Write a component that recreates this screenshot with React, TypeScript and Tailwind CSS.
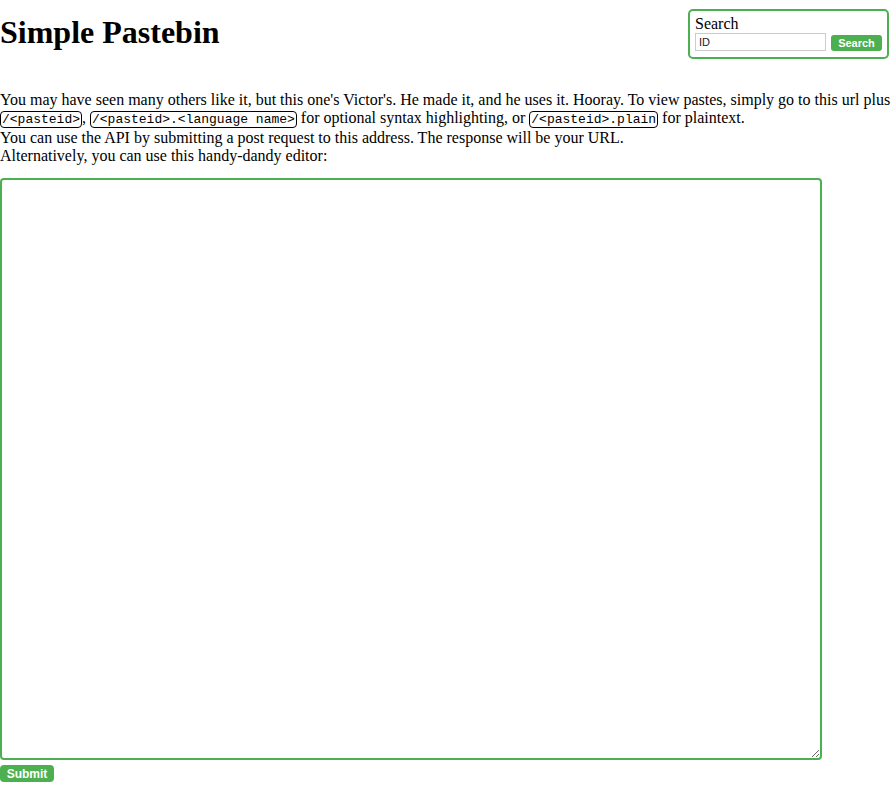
import React, { useState } from 'react';

const Code: React.FC<{ children: React.ReactNode }> = ({ children }) => (
  <code className="font-['Liberation_Mono',monospace] text-[13px] border border-black rounded-[4px] px-[1px]">
    {children}
  </code>
);

const App: React.FC = () => {
  const [query, setQuery] = useState('');
  const [paste, setPaste] = useState('');

  return (
    <div className="font-['Liberation_Serif',serif] text-[16px] text-black bg-white min-h-screen">
      <div className="flex justify-between items-start">
        <h1 className="text-[32px] font-bold leading-[normal] mt-[14px]">Simple Pastebin</h1>
        <form
          onSubmit={e => e.preventDefault()}
          className="border-2 border-[#4CAF50] rounded-[5px] mt-[9px] mr-[6px] pt-[4px] pb-[6px] px-[5px]"
        >
          <div className="leading-[normal]">Search</div>
          <div className="flex items-end gap-[5px]">
            <input
              value={query}
              onChange={e => setQuery(e.target.value)}
              placeholder="ID"
              className="w-[131px] h-[18px] border border-[#ccc] px-[3px] text-[11px] font-['Liberation_Sans',sans-serif] placeholder:text-[#222] outline-none"
            />
            <button className="w-[51px] h-[16px] bg-[#4CAF50] text-white rounded-[3px] text-[11px] font-bold font-['Liberation_Sans',sans-serif] leading-none">
              Search
            </button>
          </div>
        </form>
      </div>

      <p className="mt-[32px] leading-[18px]">
        You may have seen many others like it, but this one's Victor's. He made it, and he uses it. Hooray. To view
        pastes, simply go to this url plus <Code>/&lt;pasteid&gt;</Code>, <Code>/&lt;pasteid&gt;.&lt;language name&gt;</Code>{' '}
        for optional syntax highlighting, or <Code>/&lt;pasteid&gt;.plain</Code> for plaintext.
        <br />
        You can use the API by submitting a post request to this address. The response will be your URL.
        <br />
        Alternatively, you can use this handy-dandy editor:
      </p>

      <form onSubmit={e => e.preventDefault()} className="mt-[13px]">
        <textarea
          value={paste}
          onChange={e => setPaste(e.target.value)}
          className="block w-[822px] h-[582px] border-2 border-[#4CAF50] rounded-[4px] outline-none"
        />
        <button className="mt-[5px] w-[54px] h-[17px] bg-[#4CAF50] text-white rounded-[4px] text-[12px] font-bold font-['Liberation_Sans',sans-serif] leading-none">
          Submit
        </button>
      </form>
    </div>
  );
};

export default App;
